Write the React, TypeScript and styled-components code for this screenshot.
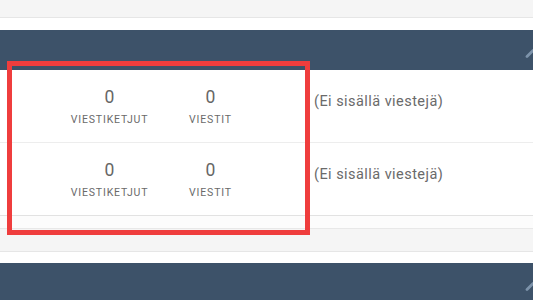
import React from "react";
import styled, { createGlobalStyle } from "styled-components";

const Global = createGlobalStyle`
  html, body { margin: 0; padding: 0; background: #ffffff; overflow: hidden; }
  body { font-family: Roboto, "Liberation Sans", Arial, sans-serif; width: 533px; height: 300px; }
`;

const Page = styled.div`
  position: relative;
  width: 533px;
  height: 300px;
  overflow: hidden;
  background: #fff;
`;

const FooterBand = styled.div<{ $h: number }>`
  height: ${(p) => p.$h}px;
  background: #f5f5f5;
  border-bottom: 1px solid #e6e6e6;
`;

const Gap = styled.div<{ $h: number }>`
  height: ${(p) => p.$h}px;
`;

const Block = styled.section`
  display: flex;
  flex-direction: column;
`;

const Header = styled.div`
  height: 40px;
  background: #3d5269;
  display: flex;
  align-items: center;
  justify-content: flex-end;
`;

const Chevron = styled.svg`
  width: 16px;
  height: 10px;
  margin-right: -8px;
  margin-top: 6px;
  flex: none;
`;

const Row = styled.div<{ $last?: boolean }>`
  height: 72px;
  display: flex;
  align-items: flex-start;
  background: #ffffff;
  border-bottom: 1px solid ${(p) => (p.$last ? "#e2e2e2" : "#ededed")};
`;

const Stats = styled.div`
  display: flex;
  margin-left: 59px;
  height: 72px;
`;

const Stat = styled.div`
  width: 101px;
  padding-top: 17px;
  display: flex;
  flex-direction: column;
  align-items: center;
`;

const Num = styled.div`
  font-size: 17.5px;
  line-height: 20px;
  color: #666666;
`;

const Label = styled.div`
  margin-top: 6px;
  font-size: 10.5px;
  line-height: 14px;
  letter-spacing: 0.85px;
  text-transform: uppercase;
  color: #6a6a6a;
`;

const Desc = styled.div`
  margin-left: 53px;
  padding-top: 23px;
  font-size: 14.5px;
  line-height: 18px;
  letter-spacing: 0.45px;
  color: #6a6a6a;
`;

const BlockEnd = styled.div`
  height: 12px;
  background: #fcfcfc;
  border-bottom: 1px solid #e8e8e8;
`;

const Highlight = styled.div`
  position: absolute;
  left: 7px;
  top: 61px;
  width: 303px;
  height: 174px;
  box-sizing: border-box;
  border: 5px solid #ef3d3d;
  pointer-events: none;
`;

const rows = [
  { threads: 0, messages: 0 },
  { threads: 0, messages: 0 },
];

const Caret = () => (
  <Chevron viewBox="0 0 16 10">
    <path d="M2 8.5 L8 2.5 L14 8.5" fill="none" stroke="#7d93ab" strokeWidth="2.8" strokeLinecap="round" strokeLinejoin="round" />
  </Chevron>
);

export default function App() {
  return (
    <Page>
      <Global />
      <FooterBand $h={17} />
      <Gap $h={12} />
      <Block>
        <Header>
          <Caret />
        </Header>
        {rows.map((r, i) => (
          <Row key={i} $last={i === rows.length - 1}>
            <Stats>
              <Stat>
                <Num>{r.threads}</Num>
                <Label>Viestiketjut</Label>
              </Stat>
              <Stat>
                <Num>{r.messages}</Num>
                <Label>Viestit</Label>
              </Stat>
            </Stats>
            <Desc>(Ei sisällä viestejä)</Desc>
          </Row>
        ))}
        <BlockEnd />
        <FooterBand $h={22} />
      </Block>
      <Gap $h={11} />
      <Block>
        <Header>
          <Caret />
        </Header>
      </Block>
      <Highlight />
    </Page>
  );
}
